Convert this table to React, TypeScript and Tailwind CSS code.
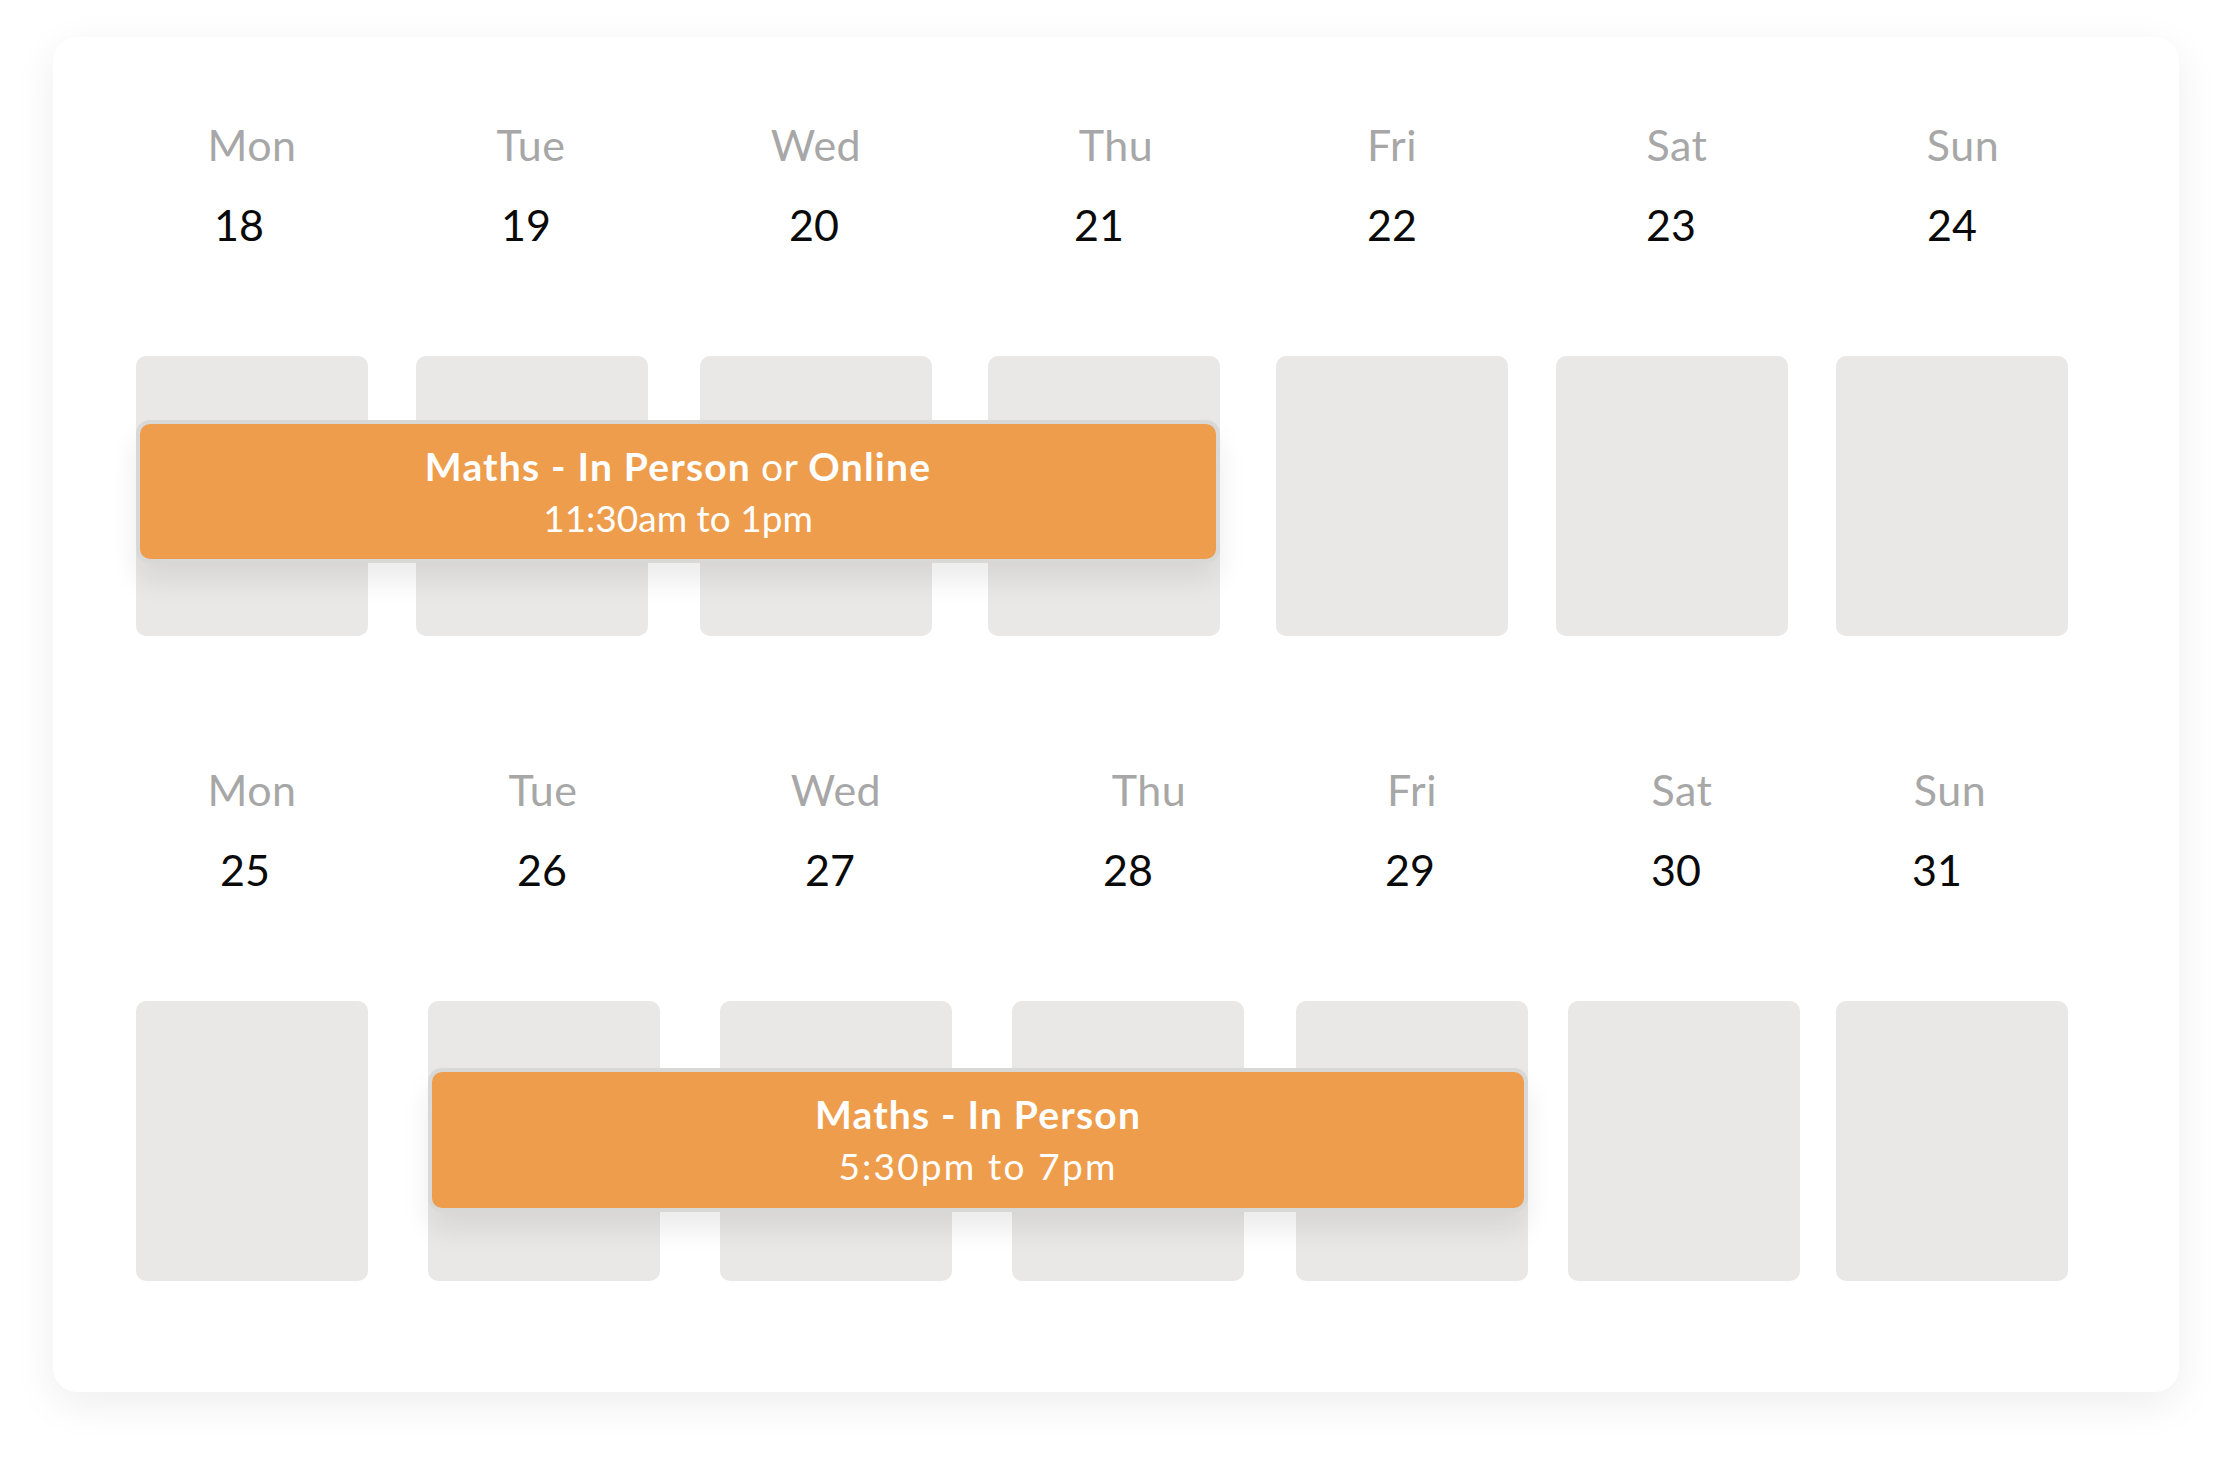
import React from "react";

type Day = { name: string; num: string; ml: string; dayShift: string; numShift: string };

const week1: Day[] = [
  { name: "Mon", num: "18", ml: "ml-0", dayShift: "translate-x-0", numShift: "-translate-x-[13px]" },
  { name: "Tue", num: "19", ml: "ml-[48px]", dayShift: "-translate-x-[1px]", numShift: "-translate-x-[6px]" },
  { name: "Wed", num: "20", ml: "ml-[52px]", dayShift: "translate-x-0", numShift: "-translate-x-[2px]" },
  { name: "Thu", num: "21", ml: "ml-[56px]", dayShift: "translate-x-[12px]", numShift: "-translate-x-[5px]" },
  { name: "Fri", num: "22", ml: "ml-[56px]", dayShift: "translate-x-0", numShift: "translate-x-0" },
  { name: "Sat", num: "23", ml: "ml-[48px]", dayShift: "translate-x-[5px]", numShift: "-translate-x-[1px]" },
  { name: "Sun", num: "24", ml: "ml-[48px]", dayShift: "translate-x-[11px]", numShift: "translate-x-0" },
];

const week2: Day[] = [
  { name: "Mon", num: "25", ml: "ml-0", dayShift: "translate-x-0", numShift: "-translate-x-[7px]" },
  { name: "Tue", num: "26", ml: "ml-[60px]", dayShift: "-translate-x-[1px]", numShift: "-translate-x-[2px]" },
  { name: "Wed", num: "27", ml: "ml-[60px]", dayShift: "translate-x-0", numShift: "-translate-x-[6px]" },
  { name: "Thu", num: "28", ml: "ml-[60px]", dayShift: "translate-x-[21px]", numShift: "translate-x-0" },
  { name: "Fri", num: "29", ml: "ml-[52px]", dayShift: "translate-x-0", numShift: "-translate-x-[2px]" },
  { name: "Sat", num: "30", ml: "ml-[40px]", dayShift: "-translate-x-[2px]", numShift: "-translate-x-[8px]" },
  { name: "Sun", num: "31", ml: "ml-[36px]", dayShift: "-translate-x-[2px]", numShift: "-translate-x-[15px]" },
];

function Week({
  days,
  event,
}: {
  days: Day[];
  event: React.ReactNode;
}) {
  return (
    <div className="relative flex">
      {days.map((d) => (
        <div key={d.num} className={`flex w-[232px] flex-col items-center ${d.ml}`}>
          <div className={`text-[43px] leading-[42px] tracking-[0.5px] text-[#a7a7a7] ${d.dayShift}`}>{d.name}</div>
          <div className={`mt-[38px] text-[43px] leading-[42px] text-[#0a0a0a] ${d.numShift}`}>{d.num}</div>
          <div className="mt-[110px] h-[280px] w-[232px] rounded-[10px] bg-[#e9e8e6]" />
        </div>
      ))}
      {event}
    </div>
  );
}

function EventBar({ title, time, timeClass }: { title: React.ReactNode; time: string; timeClass: string }) {
  return (
    <div className="flex h-full w-full flex-col items-center justify-center rounded-[14px] border-[4px] border-[#d8d8d7] bg-[#ee9d4c] leading-[52px] text-white shadow-[0_18px_28px_rgba(0,0,0,0.08)]">
      <div className="text-[39px]">{title}</div>
      <div className={`text-[37px] ${timeClass}`}>{time}</div>
    </div>
  );
}

export default function App() {
  return (
    <div className="min-h-[1460px] w-[2232px] bg-white pt-[37px] font-['Lato',sans-serif]">
      <div className="ml-[53px] w-[2126px] rounded-[24px] bg-white pb-[111px] pl-[83px] pt-[87px] shadow-[0_12px_44px_rgba(0,0,0,0.07)]">
        <Week
          days={week1}
          event={
            <div className="absolute left-0 top-[296px] h-[143px] w-[1084px]">
              <EventBar
                title={
                  <>
                    <span className="font-bold tracking-[1.2px]">Maths - In Person</span>{" "}
                    <span className="tracking-[0.5px]">or</span>{" "}
                    <span className="font-bold tracking-[1.2px]">Online</span>
                  </>
                }
                time="11:30am to 1pm"
                timeClass="tracking-normal"
              />
            </div>
          }
        />
        <div className="mt-[133px]">
          <Week
            days={week2}
            event={
              <div className="absolute left-[292px] top-[299px] h-[144px] w-[1100px]">
                <EventBar
                  title={<span className="font-bold tracking-[1.2px]">Maths - In Person</span>}
                  time="5:30pm to 7pm"
                  timeClass="tracking-[2.2px]"
                />
              </div>
            }
          />
        </div>
      </div>
    </div>
  );
}
